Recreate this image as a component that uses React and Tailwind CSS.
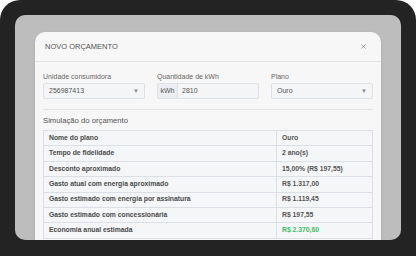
import { X } from 'lucide-react';

const rows = [
  { label: 'Nome do plano', value: 'Ouro' },
  { label: 'Tempo de fidelidade', value: '2 ano(s)' },
  { label: 'Desconto aproximado', value: '15,00% (R$ 197,55)' },
  { label: 'Gasto atual com energia aproximado', value: 'R$ 1.317,00' },
  { label: 'Gasto estimado com energia por assinatura', value: 'R$ 1.119,45' },
  { label: 'Gasto estimado com concessionária', value: 'R$ 197,55' },
  { label: 'Economia anual estimada', value: 'R$ 2.370,60', highlight: true },
];

function SelectBox({ value }) {
  return (
    <div className="h-[16px] flex items-center justify-between px-[5px] bg-[#f4f5f7] border border-[#dfe2e7] rounded-[2px]">
      <span className="text-[7px] text-[#555]">{value}</span>
      <span className="text-[6px] text-[#888]">▼</span>
    </div>
  );
}

export default function App() {
  return (
    <div className="w-[416px] h-[256px] bg-white overflow-hidden font-['Liberation_Sans',Arial,sans-serif]">
      <div className="w-full h-full bg-[#232323] rounded-t-[20px] pt-[15px] px-[15px] pb-[16px]">
        <div className="h-full bg-[#bdbdbd] rounded-[10px] overflow-hidden pt-[17px] px-[20px]">
          <div className="h-full bg-[#f7f7f7] rounded-t-[10px] shadow-sm">
            {/* Header */}
            <div className="h-[30px] flex items-center justify-between pl-[10px] pr-[14px] border-b border-[#e2e3e6]">
              <span className="text-[7.5px] text-[#555]">NOVO ORÇAMENTO</span>
              <X className="w-[7px] h-[7px] text-[#888]" strokeWidth={2.5} />
            </div>

            {/* Body */}
            <div className="px-[8px] pt-[10px]">
              <div className="grid grid-cols-3 gap-x-[12px]">
                <div>
                  <div className="text-[7px] leading-[9px] text-[#666] mb-[2px]">Unidade consumidora</div>
                  <SelectBox value="256987413" />
                </div>
                <div>
                  <div className="text-[7px] leading-[9px] text-[#666] mb-[2px]">Quantidade de kWh</div>
                  <div className="h-[16px] flex bg-[#f4f5f7] border border-[#dfe2e7] rounded-[2px]">
                    <span className="w-[20px] flex items-center justify-center bg-[#eceef1] border-r border-[#dfe2e7] text-[7px] text-[#555]">kWh</span>
                    <span className="flex items-center pl-[4px] text-[7px] text-[#555]">2810</span>
                  </div>
                </div>
                <div>
                  <div className="text-[7px] leading-[9px] text-[#666] mb-[2px]">Plano</div>
                  <SelectBox value="Ouro" />
                </div>
              </div>

              <div className="mt-[10px] border-t border-[#e2e4e8]" />

              <div className="mt-[6px] mb-[4px] text-[7.7px] leading-[10px] text-[#555]">Simulação do orçamento</div>

              <table className="w-full border-collapse">
                <tbody>
                  {rows.map((row) => (
                    <tr key={row.label} className="h-[15.4px] bg-[#f5f6f8]">
                      <td className="w-[233px] border border-[#dce0e6] px-[5px] py-0 text-[6.8px] leading-none font-bold text-[#4a4a4a]">
                        {row.label}
                      </td>
                      <td
                        className={`border border-[#dce0e6] px-[5px] py-0 text-[6.8px] leading-none font-bold ${
                          row.highlight ? 'text-[#3cc062]' : 'text-[#555]'
                        }`}
                      >
                        {row.value}
                      </td>
                    </tr>
                  ))}
                </tbody>
              </table>
            </div>
          </div>
        </div>
      </div>
    </div>
  );
}
